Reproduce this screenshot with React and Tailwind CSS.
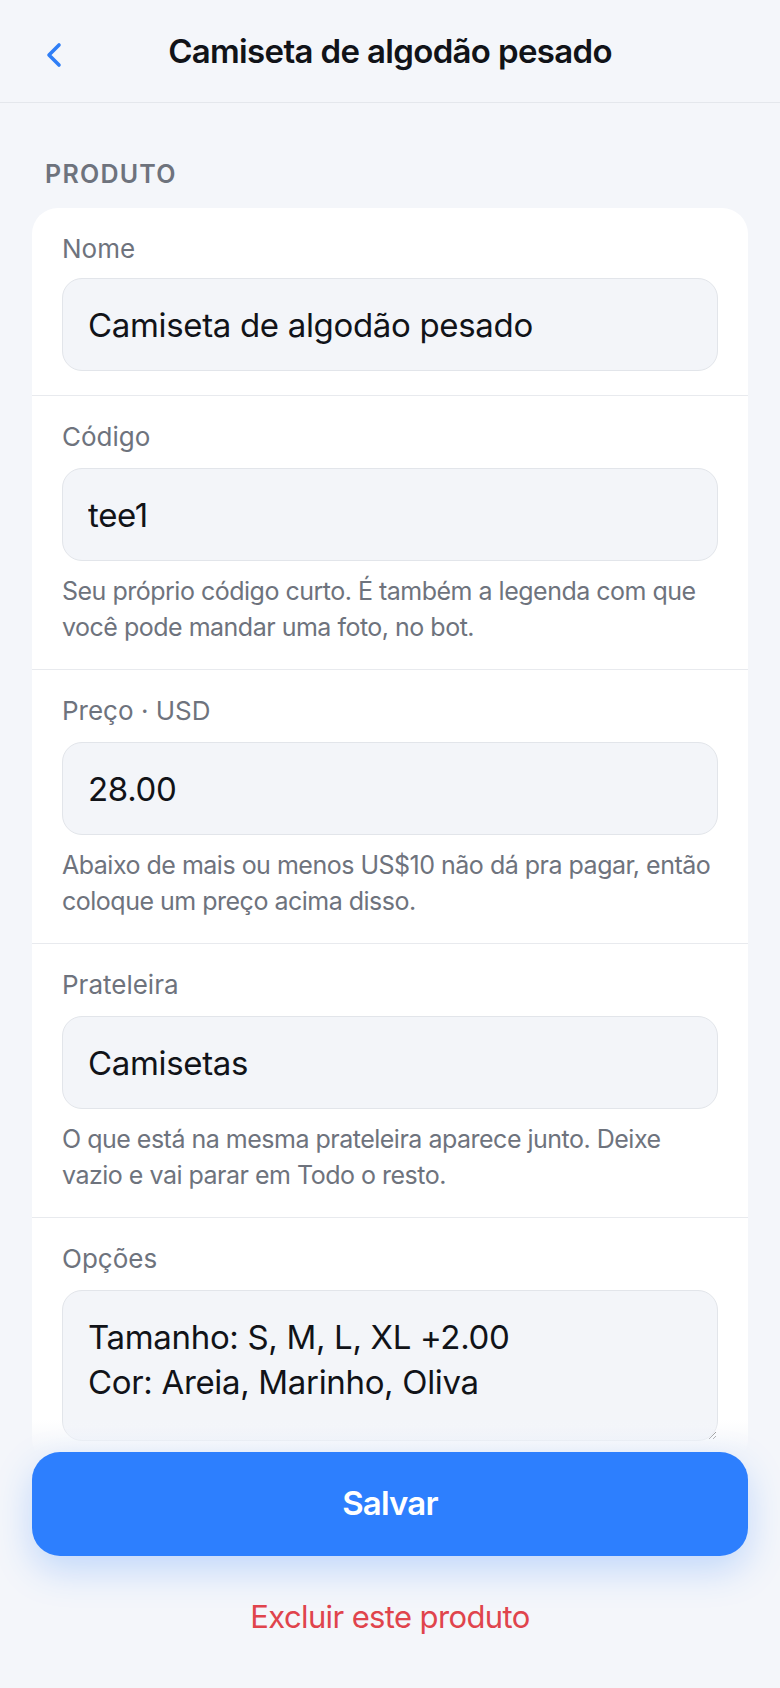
import React from "react";

const fields = [
  { label: "Nome", value: "Camiseta de algodão pesado", tight: true },
  {
    label: "Código",
    value: "tee1",
    help: "Seu próprio código curto. É também a legenda com que você pode mandar uma foto, no bot.",
  },
  {
    label: "Preço · USD",
    value: "28.00",
    help: "Abaixo de mais ou menos US$10 não dá pra pagar, então coloque um preço acima disso.",
  },
  {
    label: "Prateleira",
    value: "Camisetas",
    help: "O que está na mesma prateleira aparece junto. Deixe vazio e vai parar em Todo o resto.",
  },
];

function Field({ label, value, help, tight }) {
  return (
    <div className="px-[30px] pt-6 pb-6">
      <label className="block text-[26px] leading-[34px] text-[#6e737d]">{label}</label>
      <input
        type="text"
        defaultValue={value}
        className={
          (tight ? "mt-3 " : "mt-[14px] ") +
          "block h-[93px] w-full rounded-[20px] border border-[#e2e5ea] bg-[#f3f5f9] px-[25px] text-[33px] leading-[44px] tracking-[-0.01em] text-[#111318] outline-none"
        }
      />
      {help && (
        <p className="mt-3 text-[25px] leading-[36px] tracking-[-0.02em] text-[#6e737d]">{help}</p>
      )}
    </div>
  );
}

export default function App() {
  return (
    <div
      className="relative flex h-screen flex-col overflow-hidden bg-[#f4f6fa] text-[#111318]"
      style={{ fontFamily: "Inter, 'Noto Sans', sans-serif" }}
    >
      {/* topo */}
      <header className="grid h-[103px] shrink-0 grid-cols-[1fr_auto_1fr] items-center border-b border-[#e4e7ec]">
        <button className="flex h-full items-center pl-[45px] pt-2" aria-label="Voltar">
          <svg width="18" height="26" viewBox="0 0 18 26" fill="none">
            <path
              d="M14 3 L4 13 L14 23"
              stroke="#2f7ef6"
              strokeWidth="3.6"
              strokeLinecap="round"
              strokeLinejoin="round"
            />
          </svg>
        </button>
        <h1 className="text-[33px] font-semibold leading-[44px] tracking-[-0.02em] text-[#111318]">
          Camiseta de algodão pesado
        </h1>
        <div />
      </header>

      <main className="flex-1 overflow-y-auto px-8 pb-[280px]">
        <h2 className="mt-[55px] mb-[18px] pl-[13px] text-[25px] font-semibold leading-[32px] tracking-[0.05em] text-[#6e737d]">
          PRODUTO
        </h2>

        <div className="divide-y divide-[#e8eaee] rounded-[26px] bg-white">
          {fields.map((f) => (
            <Field key={f.label} {...f} />
          ))}

          {/* opções */}
          <div className="px-[30px] pt-6 pb-6">
            <label className="block text-[26px] leading-[34px] text-[#6e737d]">Opções</label>
            <textarea
              defaultValue={"Tamanho: S, M, L, XL +2.00\nCor: Areia, Marinho, Oliva"}
              className="mt-[14px] block h-[151px] w-full rounded-[20px] border border-[#e2e5ea] bg-[#f3f5f9] px-[25px] py-6 text-[33px] leading-[45px] tracking-[-0.01em] text-[#111318] outline-none"
            />
          </div>
        </div>
      </main>

      {/* barra fixa */}
      <div className="absolute inset-x-0 bottom-0 bg-[linear-gradient(to_bottom,rgba(244,246,250,0),#f4f6fa_32px)] px-8 pt-8 pb-[49px]">
        <button className="flex h-[104px] w-full items-center justify-center rounded-[28px] bg-[#2d7ffe] text-[33px] font-semibold tracking-[-0.025em] text-white shadow-[0_14px_36px_rgba(45,127,254,0.25)]">
          Salvar
        </button>
        <button className="mt-[39px] block w-full text-center text-[31px] leading-[44px] tracking-[-0.02em] text-[#e0444c]">
          Excluir este produto
        </button>
      </div>
    </div>
  );
}
